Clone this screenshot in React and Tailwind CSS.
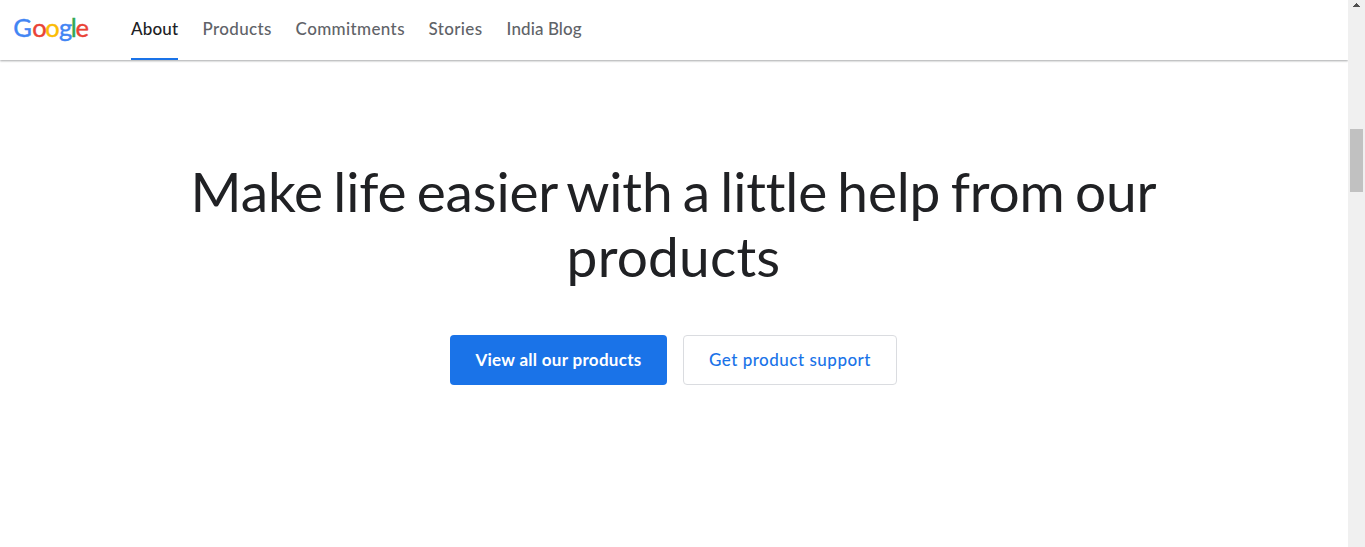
import React from 'react';

const navItems = [
    { label: 'About', active: true, style: 'w-[47px] tracking-[0.15px]' },
    { label: 'Products', style: 'w-[69px] tracking-[0.32px]' },
    { label: 'Commitments', style: 'w-[109px] tracking-[0.37px]' },
    { label: 'Stories', style: 'w-[54px] tracking-[0.35px]' },
    { label: 'India Blog', style: 'w-[76px] tracking-[0.1px]' },
];

const Logo = () => (
    <svg className="block h-[40px] w-[80px]" viewBox="0 0 80 40" role="img" aria-label="Google">
        <text y="27.2" fontSize="25.5" fontFamily="Lato, sans-serif" strokeWidth="0.4">
            <tspan x="1.3" fill="#4285f4" stroke="#4285f4">G</tspan>
            <tspan x="20.3" fill="#ea4335" stroke="#ea4335">o</tspan>
            <tspan x="33.3" fill="#fbbc05" stroke="#fbbc05">o</tspan>
            <tspan x="47" fill="#4285f4" stroke="#4285f4">g</tspan>
            <tspan x="58.8" fill="#34a853" stroke="#34a853">l</tspan>
            <tspan x="63.6" fill="#ea4335" stroke="#ea4335">e</tspan>
        </text>
    </svg>
);

const Header = () => (
    <header className="flex h-[60px] bg-white pl-[12px] shadow-[0_1px_2px_0_rgba(60,64,67,0.45)]">
        <a href="#" className="mt-[10px]">
            <Logo />
        </a>
        <nav className="ml-[39px] flex gap-[24px] text-[17px] font-medium">
            {navItems.map((item) => (
                <a
                    key={item.label}
                    href="#"
                    className={`${item.style} flex h-[60px] items-center whitespace-nowrap border-b-2 ${
                        item.active
                            ? 'border-[#1a73e8] text-[#202124]'
                            : 'border-transparent text-[#5f6368] translate-x-[0.6px]'
                    }`}
                >
                    {item.label}
                </a>
            ))}
        </nav>
    </header>
);

const Hero = () => (
    <main className="flex flex-col items-center pr-px pt-[99px]">
        <h1 className="text-center text-[55px] leading-[65px] text-[#202124] [font-variant-ligatures:none]">
            <span className="block whitespace-nowrap tracking-[-0.15px] [word-spacing:-3.6px]">
                Make life easier with a little help from our
            </span>
            <span className="block tracking-[0.2px]">products</span>
        </h1>
        <div className="mt-[46px] flex gap-[16px] text-[17px]">
            <a
                href="#"
                className="flex h-[50px] w-[217px] items-center justify-center whitespace-nowrap rounded-[4px] bg-[#1a73e8] font-bold tracking-[0.3px] text-white"
            >
                View all our products
            </a>
            <a
                href="#"
                className="flex h-[50px] w-[214px] items-center justify-center whitespace-nowrap rounded-[4px] border border-[#dadce0] font-medium tracking-[0.5px] text-[#1a73e8]"
            >
                Get product support
            </a>
        </div>
    </main>
);

const Scrollbar = () => (
    <div className="flex w-[17px] shrink-0 flex-col items-center bg-[#f0f0f0]">
        <svg className="mt-[3px] block h-[4px] w-[7px]" viewBox="0 0 7 4" shapeRendering="crispEdges">
            <path d="M3 0h1v1h1v1h1v1h1v1H0V3h1V2h1V1h1z" fill="#505050" />
        </svg>
        <div className="mt-[122px] h-[63px] w-[13px] bg-[#c1c1c1]" />
    </div>
);

const App = () => (
    <div className="flex h-[547px] w-full overflow-hidden bg-white font-['Lato',sans-serif]">
        <div className="min-w-0 flex-1">
            <Header />
            <Hero />
        </div>
        <Scrollbar />
    </div>
);

export default App;
